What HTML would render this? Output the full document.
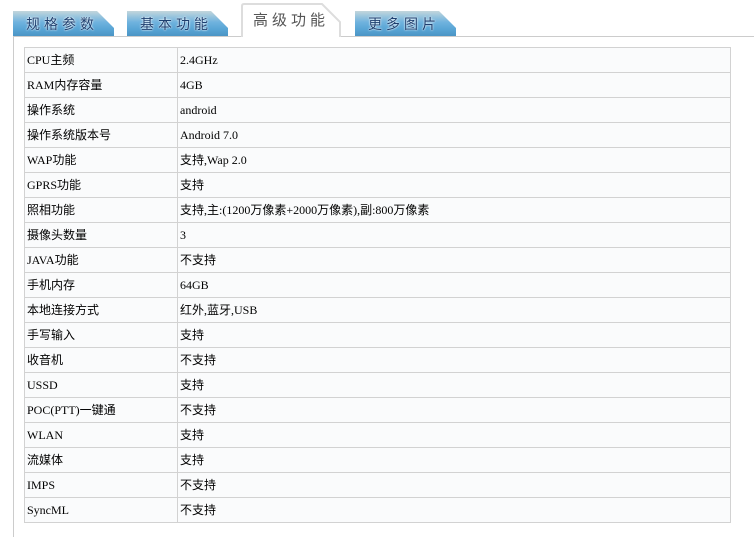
<!DOCTYPE html>
<html><head><meta charset="utf-8"><style>
body{margin:0;width:754px;height:518px;overflow:hidden;background:#fff;font-family:"Liberation Serif","Noto Sans CJK SC",serif;position:relative}
.tab{position:absolute;top:11px;height:25px;width:101px;clip-path:polygon(0 0,84px 0,101px 17px,101px 25px,0 25px);background:linear-gradient(#c3d6dc 0,#9cc6dd 20%,#6fb2de 45%,#5aa6d6 70%,#4b95c5 100%);font:14px "Noto Sans CJK SC",sans-serif;letter-spacing:4px;color:#1d3f70;text-shadow:0 0 2px #fff,0 0 1px #fff;line-height:27px;padding-left:13px;box-sizing:border-box}
.act{position:absolute;top:3px;left:241px;width:101px;height:34px}
.act span{position:absolute;left:12px;top:7px;font:15px/20px "Noto Sans CJK SC",sans-serif;letter-spacing:4px;color:#555}
.panel{position:absolute;left:13px;top:36px;width:760px;height:500px;border-top:1px solid #ccc;border-left:1px solid #ccc}
table{position:absolute;left:24px;top:47px;width:707px;border-collapse:collapse;font-size:12px;color:#000}
td{height:24px;line-height:24px;border:1px solid #d2d2d2;background:#fafbfc;padding:0 0 0 2px;white-space:nowrap;vertical-align:middle}
td:first-child{width:150px}
</style></head><body>
<div class="panel"></div>
<div class="tab" style="left:13px">规格参数</div>
<div class="tab" style="left:127px">基本功能</div>
<div class="act"><svg width="101" height="34" style="position:absolute;left:0;top:0"><path d="M1 34V3Q1 1 3 1H81L99 19V34" fill="#fff" stroke="#ddd" stroke-width="2"/></svg><span>高级功能</span></div>
<div class="tab" style="left:355px">更多图片</div>
<table>
<tr><td>CPU主频</td><td>2.4GHz</td></tr>
<tr><td>RAM内存容量</td><td>4GB</td></tr>
<tr><td>操作系统</td><td>android</td></tr>
<tr><td>操作系统版本号</td><td>Android 7.0</td></tr>
<tr><td>WAP功能</td><td>支持,Wap 2.0</td></tr>
<tr><td>GPRS功能</td><td>支持</td></tr>
<tr><td>照相功能</td><td>支持,主:(1200万像素+2000万像素),副:800万像素</td></tr>
<tr><td>摄像头数量</td><td>3</td></tr>
<tr><td>JAVA功能</td><td>不支持</td></tr>
<tr><td>手机内存</td><td>64GB</td></tr>
<tr><td>本地连接方式</td><td>红外,蓝牙,USB</td></tr>
<tr><td>手写输入</td><td>支持</td></tr>
<tr><td>收音机</td><td>不支持</td></tr>
<tr><td>USSD</td><td>支持</td></tr>
<tr><td>POC(PTT)一键通</td><td>不支持</td></tr>
<tr><td>WLAN</td><td>支持</td></tr>
<tr><td>流媒体</td><td>支持</td></tr>
<tr><td>IMPS</td><td>不支持</td></tr>
<tr><td>SyncML</td><td>不支持</td></tr>
</table>
</body></html>
